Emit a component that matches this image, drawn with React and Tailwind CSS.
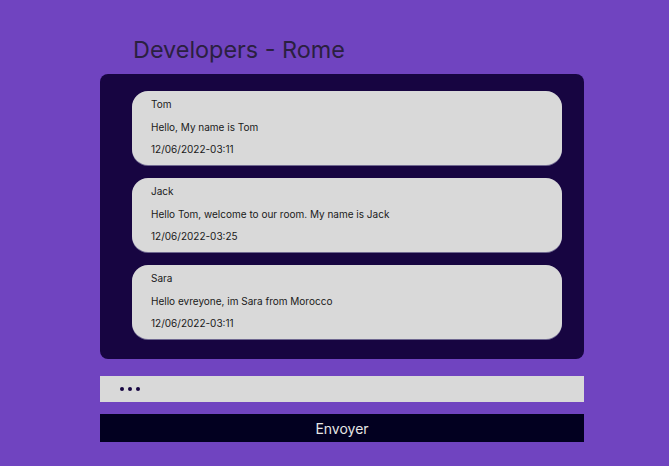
const messages = [
  { id: 1, author: 'Tom', text: 'Hello, My name is Tom', date: '12/06/2022-03:11' },
  { id: 2, author: 'Jack', text: 'Hello Tom, welcome to our room. My name is Jack', date: '12/06/2022-03:25' },
  { id: 3, author: 'Sara', text: 'Hello evreyone, im Sara from Morocco', date: '12/06/2022-03:11' },
];

export default function App() {
  return (
    <div
      className="min-h-screen w-full bg-[#7044c0] pt-[35px]"
      style={{ fontFamily: 'Inter, "Noto Sans", sans-serif' }}
    >
      <div className="w-[484px] ml-[100px]">
        <h1 className="pl-[33px] text-[23.4px] leading-[30px] text-[#2b2040]">Developers - Rome</h1>

        <div className="mt-[9px] bg-[#170541] rounded-[8px] pt-[17px] pb-[20px] pl-[32px] pr-[22px] flex flex-col gap-[13px]">
          {messages.map((m) => (
            <div
              key={m.id}
              className="h-[74px] bg-[#d9d9d9] rounded-[16px] pl-[19px] pt-[7px] text-[10px] leading-[13px] text-[#1a1a1a] flex flex-col gap-[9.5px] shadow-[0_1px_0_#6f6890]"
            >
              <div>{m.author}</div>
              <div>{m.text}</div>
              <div>{m.date}</div>
            </div>
          ))}
        </div>

        <div className="mt-[17px] h-[26px] bg-[#d9d9d9] flex items-center gap-[4px] pl-[20px]">
          <div className="w-[4px] h-[4px] rounded-full bg-[#170541]" />
          <div className="w-[4px] h-[4px] rounded-full bg-[#170541]" />
          <div className="w-[4px] h-[4px] rounded-full bg-[#170541]" />
        </div>

        <button className="mt-[12px] w-full h-[28px] bg-[#020020] text-[#e6e6e6] text-[14px] flex items-center justify-center">
          Envoyer
        </button>
      </div>
    </div>
  );
}
